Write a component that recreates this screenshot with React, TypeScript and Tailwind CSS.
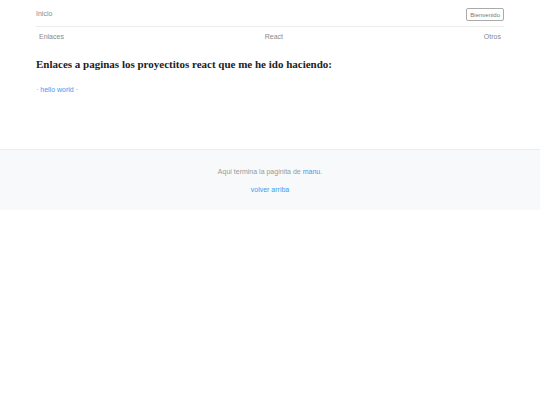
import React from 'react';

const App: React.FC = () => {
  return (
    <div className="min-h-screen bg-white" style={{ fontFamily: '"Liberation Sans", Arial, sans-serif' }}>
      <div className="mx-auto w-[468px]">
        {/* Cabecera */}
        <header className="flex items-center justify-between h-[27px] pt-[3px] border-b border-[#ececec]">
          <a href="#" className="text-[7px] text-[#888]">Inicio</a>
          <button className="text-[6px] text-[#777] border border-[#aaa] rounded-[2px] px-[3px] h-[13px] leading-none">
            Bienvenido
          </button>
        </header>

        <nav className="flex justify-between px-[3px] pt-[5px] text-[7px] text-[#888]">
          <a href="#" className="text-[#888]">Enlaces</a>
          <a href="#" className="text-[#888]">React</a>
          <a href="#" className="text-[#888]">Otros</a>
        </nav>

        <main className="pt-[13px] pb-[54px]">
          <h2
            className="text-[11px] leading-[16px] font-bold text-[#222]"
            style={{ fontFamily: '"Liberation Serif", "Times New Roman", serif' }}
          >
            Enlaces a paginas los proyectitos react que me he ido haciendo:
          </h2>
          <p className="mt-[13px] text-[7px] text-[#3c9cf2]">
            · <a href="#" className="text-[#3c9cf2]">hello world</a> ·
          </p>
        </main>
      </div>

      <footer className="bg-[#f8f9fa] border-t border-[#ececec] h-[61px] flex flex-col items-center pt-[17px] text-[7px]">
        <p className="text-[#999]">
          Aqui termina la paginita de <a href="#" className="text-[#3c9cf2]">manu</a>.
        </p>
        <a href="#" className="mt-[7px] text-[#3c9cf2]">volver arriba</a>
      </footer>
    </div>
  );
};

export default App;
